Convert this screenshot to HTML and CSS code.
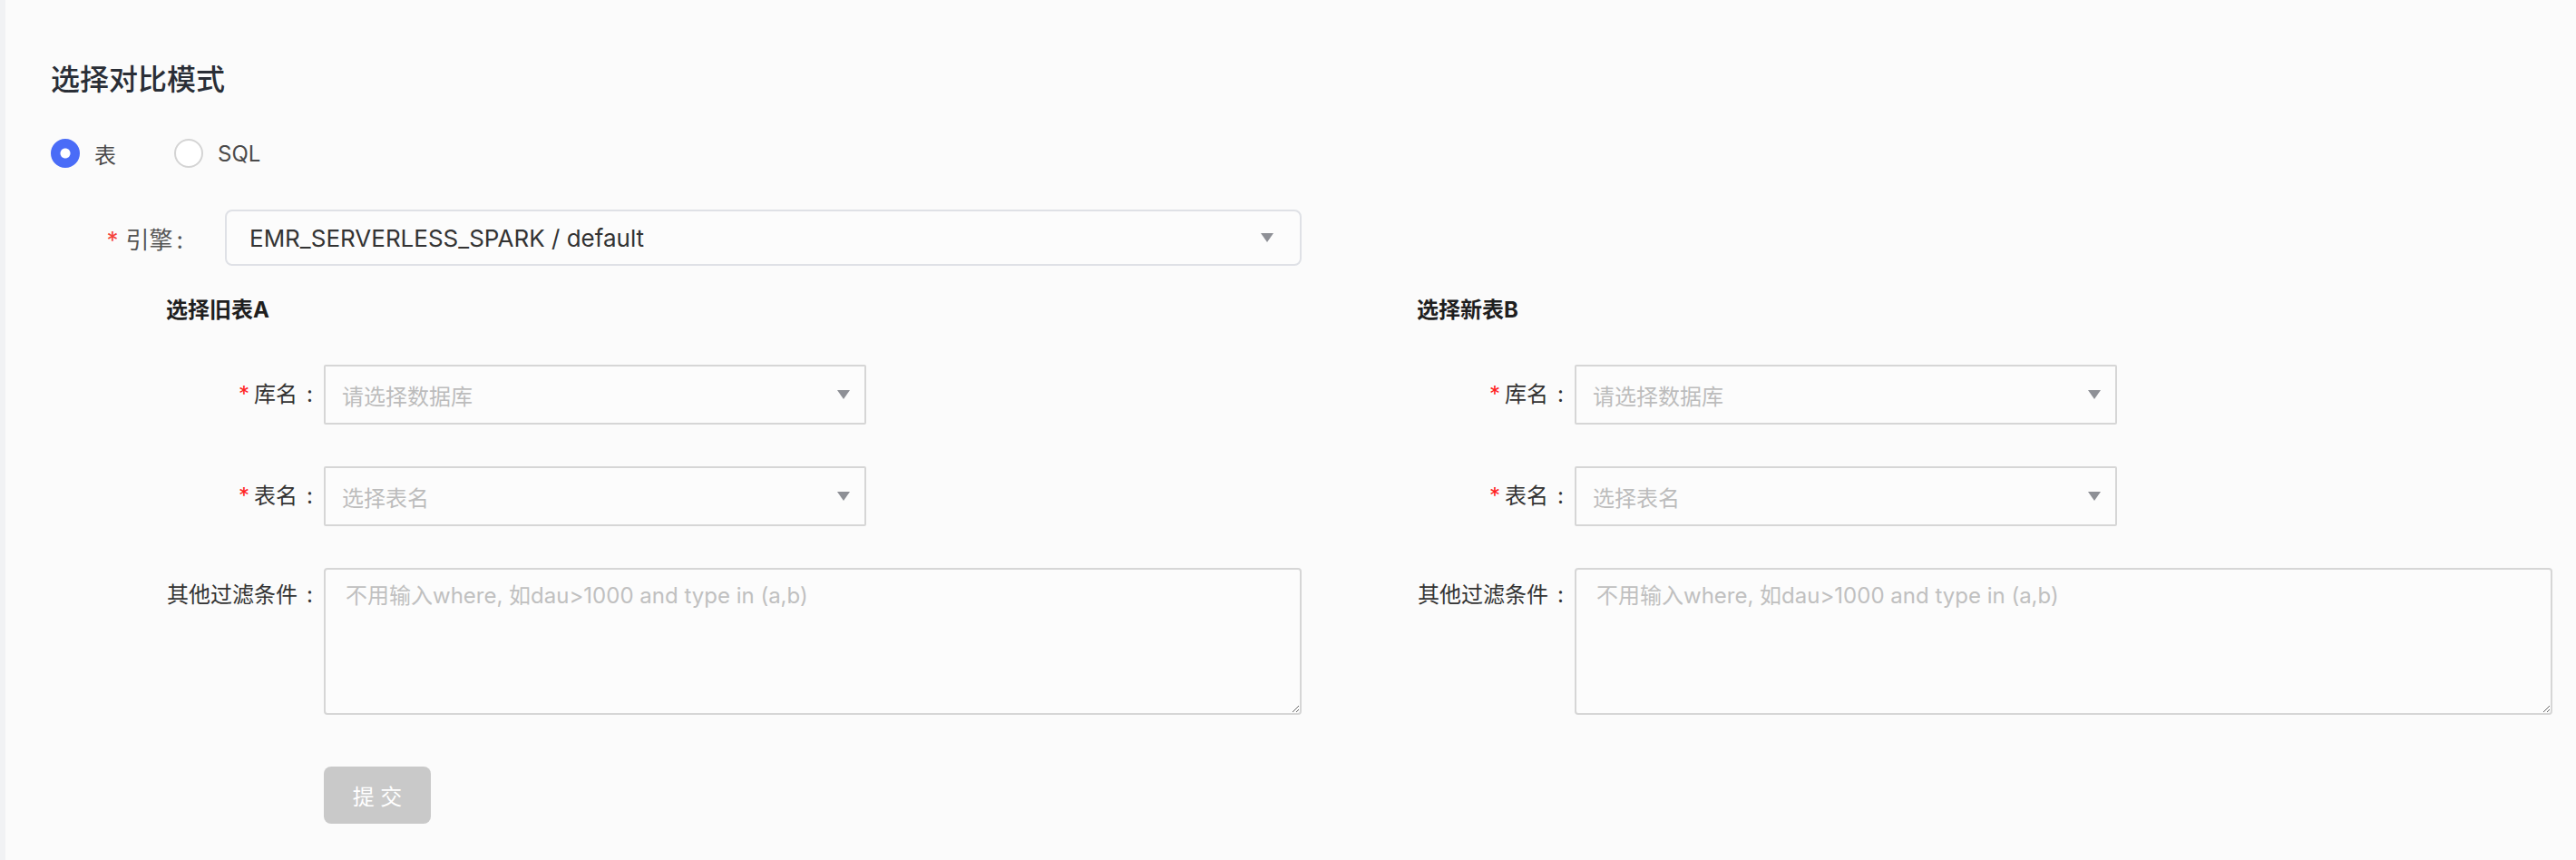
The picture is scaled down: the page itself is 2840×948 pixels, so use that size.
FILE: index.html
```html
<!DOCTYPE html>
<html lang="zh-CN">
<head>
    <meta charset="UTF-8">
    <meta name="viewport" content="width=device-width, initial-scale=1.0">
    <title>数据对比</title>
    <link rel="stylesheet" href="styles.css">
</head>
<body>
    <div class="page">
        <h2 class="page-title">选择对比模式</h2>

        <div class="mode-group">
            <label class="radio is-checked"><span class="radio-dot"></span><span class="radio-text">表</span></label>
            <label class="radio"><span class="radio-dot"></span><span class="radio-text">SQL</span></label>
        </div>

        <div class="engine-item">
            <label class="engine-label"><span class="req">*</span>引擎<span class="colon">:</span></label>
            <div class="engine-select">
                <span class="select-value">EMR_SERVERLESS_SPARK / default</span>
                <i class="caret"></i>
            </div>
        </div>

        <div class="compare">
            <!-- old table -->
            <div class="compare-col">
                <h4 class="col-title">选择旧表A</h4>
                <div class="field">
                    <label class="field-label"><span class="req">*</span>库名<span class="colon">:</span></label>
                    <div class="box-select"><span class="placeholder">请选择数据库</span><i class="caret"></i></div>
                </div>
                <div class="field">
                    <label class="field-label"><span class="req">*</span>表名<span class="colon">:</span></label>
                    <div class="box-select"><span class="placeholder">选择表名</span><i class="caret"></i></div>
                </div>
                <div class="field field-top">
                    <label class="field-label">其他过滤条件<span class="colon">:</span></label>
                    <textarea class="filter-input" placeholder="不用输入where, 如dau>1000 and type in (a,b)"></textarea>
                </div>
                <div class="field">
                    <span class="field-label"></span>
                    <button class="submit-btn" disabled>提 交</button>
                </div>
            </div>

            <!-- new table -->
            <div class="compare-col">
                <h4 class="col-title">选择新表B</h4>
                <div class="field">
                    <label class="field-label"><span class="req">*</span>库名<span class="colon">:</span></label>
                    <div class="box-select"><span class="placeholder">请选择数据库</span><i class="caret"></i></div>
                </div>
                <div class="field">
                    <label class="field-label"><span class="req">*</span>表名<span class="colon">:</span></label>
                    <div class="box-select"><span class="placeholder">选择表名</span><i class="caret"></i></div>
                </div>
                <div class="field field-top">
                    <label class="field-label">其他过滤条件<span class="colon">:</span></label>
                    <textarea class="filter-input" placeholder="不用输入where, 如dau>1000 and type in (a,b)"></textarea>
                </div>
            </div>
        </div>
    </div>
</body>
</html>
```

FILE: styles.css
```css
html, body {
    margin: 0;
    height: 100%;
}
body {
    font-family: Inter, "Noto Sans CJK SC", sans-serif;
    background-color: #fbfbfb;
    color: #333;
}
.page {
    min-height: 100%;
    box-sizing: border-box;
    border-left: 6px solid #f1f2f4;
    padding: 66px 0 0 50px;
}
.page-title {
    margin: 0;
    font-size: 32px;
    line-height: 44px;
    font-weight: 500;
    color: #2a2e36;
}

/* mode radios */
.mode-group {
    display: flex;
    gap: 64px;
    margin-top: 43px;
    height: 32px;
}
.radio {
    display: flex;
    align-items: center;
    gap: 16px;
    font-size: 24px;
    color: #4a4a4a;
}
.radio-dot {
    width: 32px;
    height: 32px;
    box-sizing: border-box;
    border-radius: 50%;
    border: 2px solid #d4d4d4;
    background: #fff;
}
.radio.is-checked .radio-dot {
    border-color: #4a6cf7;
    background: radial-gradient(circle, #fff 0 5px, #4a6cf7 6px);
}

/* engine row */
.engine-item {
    display: flex;
    align-items: center;
    margin-top: 46px;
}
.engine-label {
    width: 192px;
    box-sizing: border-box;
    padding-right: 46px;
    text-align: right;
    font-size: 26px;
    color: #555;
}
.colon {
    margin-left: 4px;
}
.req {
    color: #f5443c;
    margin-right: 8px;
}
.engine-select {
    width: 1187px;
    height: 62px;
    box-sizing: border-box;
    border: 2px solid #dfe1e6;
    border-radius: 8px;
    background: #fcfcfc;
    display: flex;
    align-items: center;
    justify-content: space-between;
    padding: 0 29px 0 25px;
    font-size: 26px;
    color: #333;
}
.caret {
    width: 0;
    height: 0;
    border-left: 7px solid transparent;
    border-right: 7px solid transparent;
    border-top: 10px solid #8e9096;
}

/* two table columns */
.compare {
    display: flex;
    margin-top: 33px;
    padding-left: 127px;
}
.compare-col {
    width: 1379px;
    flex-shrink: 0;
}
.col-title {
    margin: 0 0 44px;
    font-size: 24px;
    line-height: 32px;
    font-weight: 700;
    color: #1f1f1f;
}
.field {
    display: flex;
    align-items: center;
    margin-bottom: 46px;
}
.field-top {
    align-items: flex-start;
    margin-bottom: 57px;
}
.field-label {
    width: 162px;
    margin-right: 12px;
    flex-shrink: 0;
    text-align: right;
    font-size: 24px;
    line-height: 66px;
    color: #333;
}
.field-label .colon {
    margin-left: 10px;
}
.field-top .field-label {
    line-height: 60px;
}
.field-label .req {
    color: #ff2020;
    margin-right: 5px;
}
.box-select {
    width: 598px;
    height: 66px;
    box-sizing: border-box;
    border: 2px solid #d6d6d6;
    border-radius: 2px;
    background: #fcfcfc;
    display: flex;
    align-items: center;
    justify-content: space-between;
    padding: 0 16px 0 18px;
}
.placeholder {
    font-size: 24px;
    color: #bcbcbc;
}
.filter-input {
    width: 1078px;
    height: 162px;
    box-sizing: border-box;
    border: 2px solid #d6d6d6;
    border-radius: 4px;
    background: #fcfcfc;
    padding: 11px 22px;
    font-family: inherit;
    font-size: 24px;
    line-height: 36px;
    color: #333;
    resize: vertical;
}
.filter-input::placeholder {
    color: #c0c0c0;
}
.submit-btn {
    width: 118px;
    height: 63px;
    border: none;
    border-radius: 8px;
    background: #c9c9c9;
    color: #fff;
    font-family: inherit;
    font-size: 24px;
    padding: 0;
}
```
